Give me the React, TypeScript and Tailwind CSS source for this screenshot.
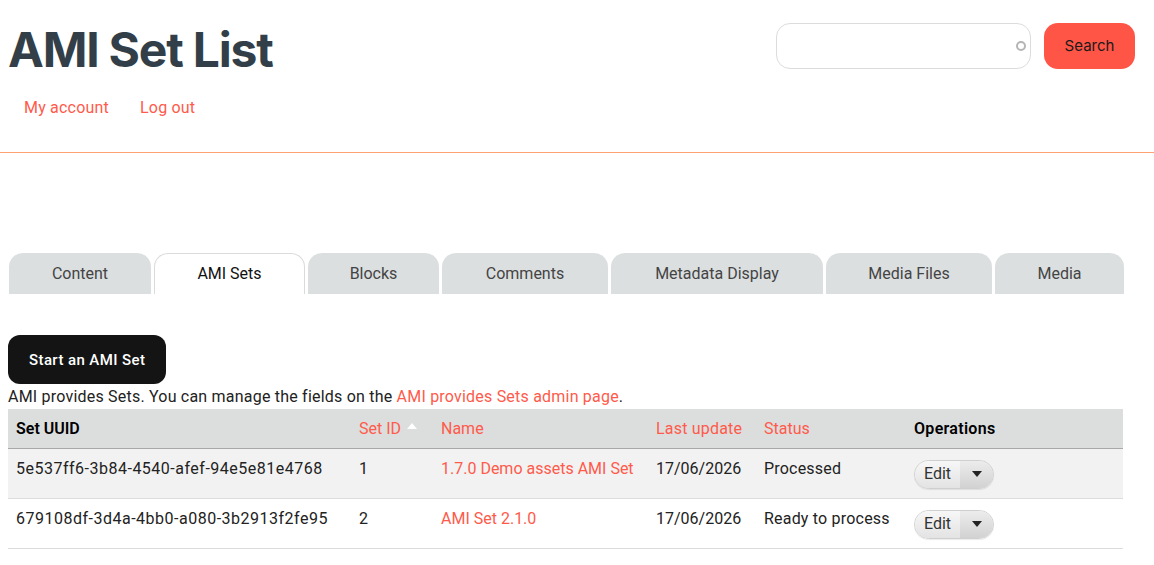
import React from "react";

const body = { fontFamily: "Roboto, 'Liberation Sans', sans-serif" };

function EditButton() {
  return (
    <div className="inline-flex h-[29px] rounded-full border border-[#cfcfcf] overflow-hidden shadow-[0_1px_1px_rgba(0,0,0,0.08)]">
      <span className="flex items-center pl-[9px] pr-[9px] text-[16px] text-[#333] bg-gradient-to-b from-[#f7f7f7] to-[#e3e3e3]">Edit</span>
      <span className="flex items-center justify-center w-[33px] bg-gradient-to-b from-[#ececec] to-[#d2d2d2]">
        <svg width="10" height="6" viewBox="0 0 10 6"><path d="M0 0h10L5 6z" fill="#222" /></svg>
      </span>
    </div>
  );
}

export default function App() {
  const tabs = [
    { label: "Content", w: "w-[142px]" },
    { label: "AMI Sets", w: "w-[151px]", active: true },
    { label: "Blocks", w: "w-[131px]" },
    { label: "Comments", w: "w-[166px]" },
    { label: "Metadata Display", w: "w-[212px]" },
    { label: "Media Files", w: "w-[166px]" },
    { label: "Media", w: "w-[129px]" },
  ];
  const rows = [
    { uuid: "5e537ff6-3b84-4540-afef-94e5e81e4768", id: "1", name: "1.7.0 Demo assets AMI Set", date: "17/06/2026", status: "Processed", bg: "bg-[#f2f2f2]" },
    { uuid: "679108df-3d4a-4bb0-a080-3b2913f2fe95", id: "2", name: "AMI Set 2.1.0", date: "17/06/2026", status: "Ready to process", bg: "bg-white" },
  ];
  return (
    <div className="w-[1154px] h-[565px] bg-white overflow-hidden" style={body}>
      <header className="border-b border-[#fca273] h-[153px]">
        <div className="flex justify-between pl-[8px] pr-[19px]">
          <div>
            <h1 className="text-[48px] leading-[58px] font-bold text-[#333f48] mt-[21px] tracking-[-1.2px]" style={{ fontFamily: "Inter, sans-serif" }}>AMI Set List</h1>
            <nav className="flex gap-[31px] pl-[16px] mt-[17px] text-[16px] text-[#ff5a4b] tracking-[0.2px]">
              <a>My account</a>
              <a>Log out</a>
            </nav>
          </div>
          <div className="flex items-start gap-[13px] pt-[23px]">
            <div className="w-[255px] h-[46px] rounded-[14px] border border-[#dcdcdc] flex items-center justify-end pr-[4px]">
              <span className="w-[10px] h-[10px] rounded-full border-2 border-[#b5b5b5]" />
            </div>
            <button className="w-[91px] h-[46px] rounded-[14px] bg-[#ff5546] text-[15px] text-[#1a1a1a]" style={{ fontFamily: "Inter, sans-serif" }}>Search</button>
          </div>
        </div>
      </header>

      <ul className="flex gap-[3px] pl-[9px] mt-[100px]">
        {tabs.map((t) => (
          <li
            key={t.label}
            className={`${t.w} h-[41px] flex items-center justify-center rounded-t-[14px] text-[16px] ${t.active ? "bg-white border border-b-0 border-[#dadada] text-[#111]" : "bg-[#dcdfe0] text-[#444]"}`}
          >
            {t.label}
          </li>
        ))}
      </ul>

      <div className="px-[8px] mt-[41px]">
        <button className="h-[49px] px-[21px] rounded-[12px] bg-[#141414] text-white text-[15px] font-medium tracking-[0.4px] pt-[2px]">Start an AMI Set</button>
        <p className="text-[16px] text-[#222] leading-[24px] pt-[1px] tracking-[0.21px]">
          AMI provides Sets. You can manage the fields on the <a className="text-[#ff5a4b]">AMI provides Sets admin page</a>.
        </p>
        <table className="w-[1115px] border-collapse text-[16px] text-left">
          <colgroup>
            <col className="w-[343px]" />
            <col className="w-[82px]" />
            <col className="w-[215px]" />
            <col className="w-[108px]" />
            <col className="w-[150px]" />
            <col className="w-[217px]" />
          </colgroup>
          <thead>
            <tr className="bg-[#dcdddd] border-b border-[#a8a8a8] h-[39px]">
              <th className="pl-[8px] pt-[2px] font-semibold text-black">Set UUID</th>
              <th className="pl-[8px] pt-[2px] font-normal text-[#ff5a4b]">
                <span className="inline-flex items-center gap-[6px]">Set ID
                  <svg width="10" height="6" viewBox="0 0 10 6" className="-mt-[6px]"><path d="M0 6h10L5 0z" fill="#fff" /></svg>
                </span>
              </th>
              <th className="pl-[8px] pt-[2px] font-normal text-[#ff5a4b]">Name</th>
              <th className="pl-[8px] pt-[2px] font-normal text-[#ff5a4b] tracking-[0.2px]">Last update</th>
              <th className="pl-[8px] pt-[2px] font-normal text-[#ff5a4b]">Status</th>
              <th className="pl-[8px] pt-[2px] font-semibold text-black tracking-[0.3px]">Operations</th>
            </tr>
          </thead>
          <tbody>
            {rows.map((r) => (
              <tr key={r.uuid} className={`${r.bg} border-b border-[#dcdcdc] text-[#222]`}>
                <td className="pl-[8px] pt-[8px] pb-[17px] align-top tracking-[0.5px]">{r.uuid}</td>
                <td className="pl-[8px] pt-[8px] align-top">{r.id}</td>
                <td className="pl-[8px] pt-[8px] align-top text-[#ff5a4b]">{r.name}</td>
                <td className="pl-[8px] pt-[8px] align-top">{r.date}</td>
                <td className="pl-[8px] pt-[8px] align-top tracking-[0.2px]">{r.status}</td>
                <td className="pl-[8px] pt-[11px] align-top"><EditButton /></td>
              </tr>
            ))}
          </tbody>
        </table>
      </div>
    </div>
  );
}
